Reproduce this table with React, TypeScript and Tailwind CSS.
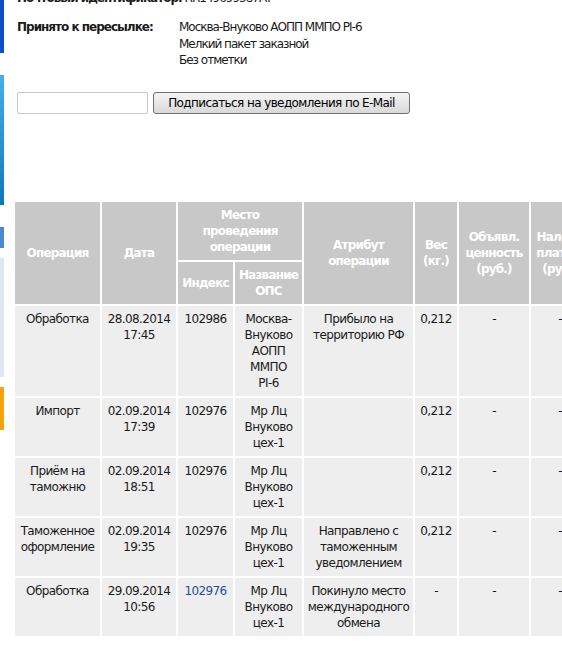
import React from 'react';

type Row = {
  op: string;
  date: string;
  index: string;
  indexLink?: boolean;
  place: string;
  attr: string;
  weight: string;
  value: string;
  cod: string;
};

const ROWS: Row[] = [
  {
    op: 'Обработка',
    date: '28.08.2014\n17:45',
    index: '102986',
    place: 'Москва-\nВнуково\nАОПП\nММПО\nPI-6',
    attr: 'Прибыло на\nтерриторию РФ',
    weight: '0,212',
    value: '-',
    cod: '-',
  },
  {
    op: 'Импорт',
    date: '02.09.2014\n17:39',
    index: '102976',
    place: 'Мр Лц\nВнуково\nцех-1',
    attr: '',
    weight: '0,212',
    value: '-',
    cod: '-',
  },
  {
    op: 'Приём на\nтаможню',
    date: '02.09.2014\n18:51',
    index: '102976',
    place: 'Мр Лц\nВнуково\nцех-1',
    attr: '',
    weight: '0,212',
    value: '-',
    cod: '-',
  },
  {
    op: 'Таможенное\nоформление',
    date: '02.09.2014\n19:35',
    index: '102976',
    place: 'Мр Лц\nВнуково\nцех-1',
    attr: 'Направлено с\nтаможенным\nуведомлением',
    weight: '0,212',
    value: '-',
    cod: '-',
  },
  {
    op: 'Обработка',
    date: '29.09.2014\n10:56',
    index: '102976',
    indexLink: true,
    place: 'Мр Лц\nВнуково\nцех-1',
    attr: 'Покинуло место\nмеждународного\nобмена',
    weight: '-',
    value: '-',
    cod: '-',
  },
];

const TH = 'bg-[#c8c8c8] text-white font-bold px-[3px] py-[5px] align-middle whitespace-pre-line tracking-[-0.8px]';
const TD = 'bg-[#eeeeee] px-[3px] py-[5px] align-top whitespace-pre-line';

export default function App() {
  return (
    <div className="w-full min-h-screen bg-white overflow-hidden flex font-['DejaVu_Sans',sans-serif] text-[12px] text-[#1a1a1a]">
      {/* side menu edge, cut off by the viewport */}
      <aside className="w-[4px] shrink-0 flex flex-col">
        <div className="h-[53px] bg-[#0b50c6]" />
        <div className="h-[22px]" />
        <div className="h-[130px] bg-linear-to-b from-[#40b2e8] to-[#0a78bc]" />
        <div className="h-[22px]" />
        <div className="h-[21px] bg-[#4a8ad2]" />
        <div className="h-[10px]" />
        <div className="h-[119px] bg-[#dfe7f3]" />
        <div className="h-[10px]" />
        <div className="h-[43px] bg-[#f6a208]" />
      </aside>

      <main className="flex-1 min-w-0">
        <div className="pl-[13px]">
          <div className="leading-[16px] -mt-[10px] tracking-[-1px] whitespace-nowrap">
            <b>Почтовый идентификатор:</b> RR149699587AT
          </div>
          <div className="grid grid-cols-[162px_1fr] leading-[16.5px] mt-[13px] tracking-[-1px]">
            <div className="font-bold whitespace-nowrap">Принято к пересылке:</div>
            <div>
              Москва-Внуково АОПП ММПО PI-6
              <br />
              Мелкий пакет заказной
              <br />
              Без отметки
            </div>
          </div>

          <div className="flex gap-[5px] mt-[23px]">
            <input type="text" className="w-[131px] h-[22px] bg-white border border-[#c6c6c6] rounded-[2px] outline-none" />
            <button className="w-[257px] h-[22px] border border-[#707070] rounded-[3px] bg-linear-to-b from-[#f5f5f5] to-[#d9d9d9] text-black tracking-[-0.6px] leading-none">
              Подписаться на уведомления по E-Mail
            </button>
          </div>
        </div>

        <div className="pl-[9px] mt-[86px]">
          <table className="table-fixed w-[578px] border-separate border-spacing-[2px] text-center leading-[16px]">
            <colgroup>
              <col className="w-[85px]" />
              <col className="w-[74px]" />
              <col className="w-[55px]" />
              <col className="w-[67px]" />
              <col className="w-[109px]" />
              <col className="w-[42px]" />
              <col className="w-[70px]" />
              <col className="w-[58px]" />
            </colgroup>
            <thead>
              <tr>
                <th rowSpan={2} className={TH}>Операция</th>
                <th rowSpan={2} className={TH}>Дата</th>
                <th colSpan={2} className={TH}>{'Место\nпроведения\nоперации'}</th>
                <th rowSpan={2} className={TH}>{'Атрибут\nоперации'}</th>
                <th rowSpan={2} className={TH}>{'Вес\n(кг.)'}</th>
                <th rowSpan={2} className={TH}>{'Объявл.\nценность\n(руб.)'}</th>
                <th rowSpan={2} className={TH}>{'Налож.\nплатеж\n(руб.)'}</th>
              </tr>
              <tr>
                <th className={TH}>Индекс</th>
                <th className={TH}>{'Название\nОПС'}</th>
              </tr>
            </thead>
            <tbody className="tracking-[-0.6px]">
              {ROWS.map((r, i) => (
                <tr key={i}>
                  <td className={TD}>{r.op}</td>
                  <td className={TD}>{r.date}</td>
                  <td className={TD}>
                    {r.indexLink ? <a href="#" className="text-[#1f4f9f]">{r.index}</a> : r.index}
                  </td>
                  <td className={TD}>{r.place}</td>
                  <td className={TD}>{r.attr}</td>
                  <td className={TD}>{r.weight}</td>
                  <td className={TD}>{r.value}</td>
                  <td className={TD}>{r.cod}</td>
                </tr>
              ))}
            </tbody>
          </table>
        </div>
      </main>
    </div>
  );
}
